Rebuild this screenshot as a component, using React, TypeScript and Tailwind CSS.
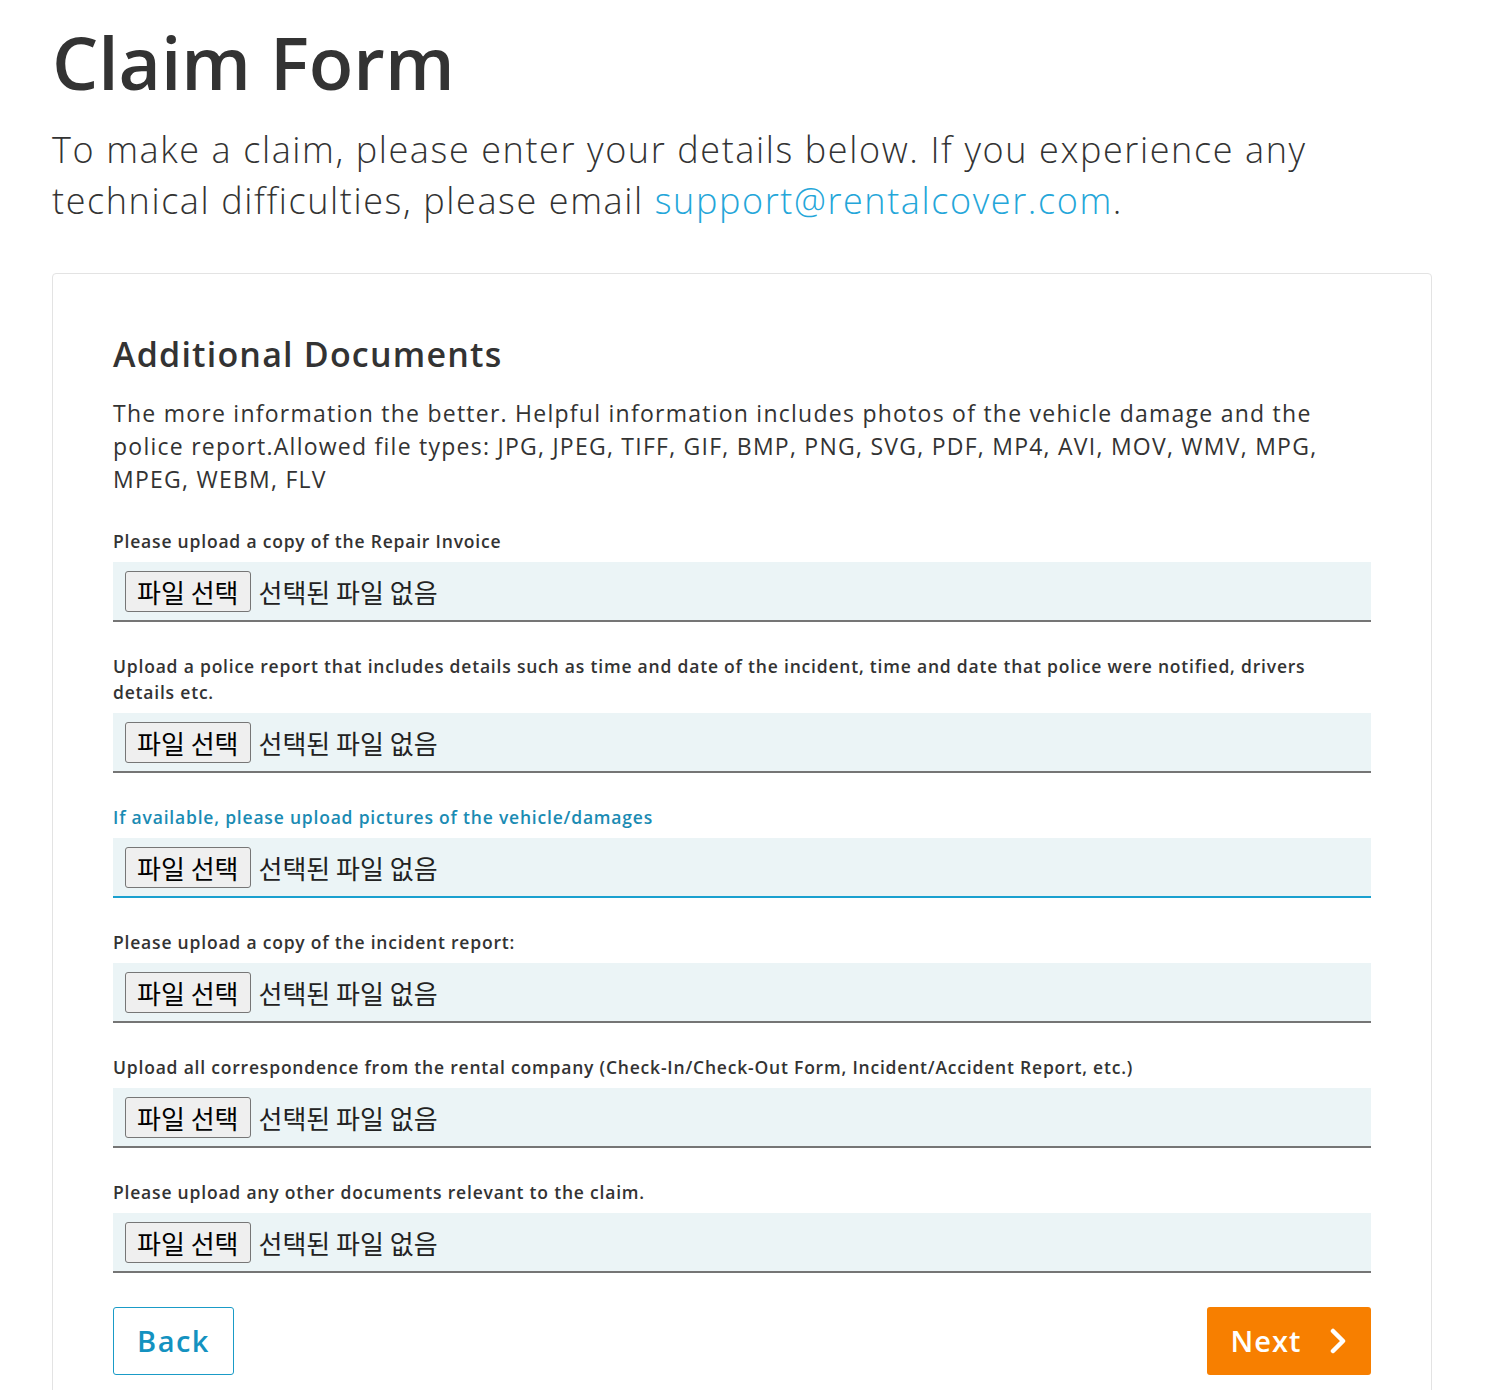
import React from 'react';

const fields = [
  { label: 'Please upload a copy of the Repair Invoice' },
  {
    label:
      'Upload a police report that includes details such as time and date of the incident, time and date that police were notified, drivers details etc.',
  },
  { label: 'If available, please upload pictures of the vehicle/damages', active: true },
  { label: 'Please upload a copy of the incident report:' },
  {
    label:
      'Upload all correspondence from the rental company (Check-In/Check-Out Form, Incident/Accident Report, etc.)',
  },
  { label: 'Please upload any other documents relevant to the claim.' },
];

function FileField({ label, active }: { label: string; active?: boolean }) {
  return (
    <div className="flex flex-col">
      <label
        className={
          'max-w-[1220px] text-[17.5px] leading-[26px] font-semibold mb-2 tracking-[0.8px] ' +
          (active ? 'text-[#1a8bb3]' : 'text-[#333333]')
        }
      >
        {label}
      </label>
      <div
        className={
          'h-[60px] bg-[#ebf4f6] flex items-center pl-3 border-b-2 ' +
          (active ? 'border-[#1aa0cf]' : 'border-[#757575]')
        }
      >
        <span
          className="h-[41px] px-[11px] flex items-center border border-[#767676] rounded-[3px] bg-[#efefef] text-[26px] text-black"
          style={{ fontFamily: '"Noto Sans CJK KR", sans-serif' }}
        >
          파일 선택
        </span>
        <span
          className="ml-[8px] text-[26px] text-[#222]"
          style={{ fontFamily: '"Noto Sans CJK KR", sans-serif' }}
        >
          선택된 파일 없음
        </span>
      </div>
    </div>
  );
}

export default function App() {
  return (
    <div className="bg-white min-h-[1390px] font-['Open_Sans',sans-serif] text-[#333333]">
      <div className="w-[1380px] ml-[52px] pt-[18px]">
        <h1 className="text-[73px] leading-[88px] font-semibold tracking-[0px] text-[#333333]">
          Claim Form
        </h1>
        <p className="mt-[18px] text-[36px] leading-[51px] font-light text-[#333333] tracking-[1.6px]">
          To make a claim, please enter your details below. If you experience any technical difficulties,
          please email <a className="text-[#24a6d9]">support@rentalcover.com</a>.
        </p>

        <div className="mt-[47px] border border-[#e3e3e3] rounded-[4px] px-[60px] pt-[56px] pb-[60px]">
          <h2 className="text-[34px] leading-[48px] font-semibold tracking-[1.2px] text-[#333333]">
            Additional Documents
          </h2>
          <p className="mt-[19px] text-[23px] leading-[33px] text-[#333333] tracking-[1.25px] w-[1258px]">
            The more information the better. Helpful information includes photos of the vehicle damage and the
            police report.Allowed file types: JPG, JPEG, TIFF, GIF, BMP, PNG, SVG, PDF, MP4, AVI, MOV, WMV, MPG,
            MPEG, WEBM, FLV
          </p>

          <div className="mt-[32px] flex flex-col gap-[31px] w-[1258px]">
            {fields.map((f, i) => (
              <FileField key={i} label={f.label} active={f.active} />
            ))}
          </div>

          <div className="mt-[34px] flex justify-between w-[1258px]">
            <button className="h-[68px] w-[121px] border border-[#1a9bc7] rounded-[3px] text-[29px] font-semibold tracking-[1.5px] text-[#1492c0] bg-white">
              Back
            </button>
            <button className="h-[68px] w-[164px] rounded-[3px] bg-[#f77f00] text-white text-[29px] font-semibold tracking-[1px] flex items-center justify-center gap-[28px]">
              Next
              <svg width="18" height="26" viewBox="0 0 18 26" fill="none">
                <path d="M4 3l10 10-10 10" stroke="white" strokeWidth="4.5" strokeLinecap="round" strokeLinejoin="round" />
              </svg>
            </button>
          </div>
        </div>
      </div>
    </div>
  );
}
